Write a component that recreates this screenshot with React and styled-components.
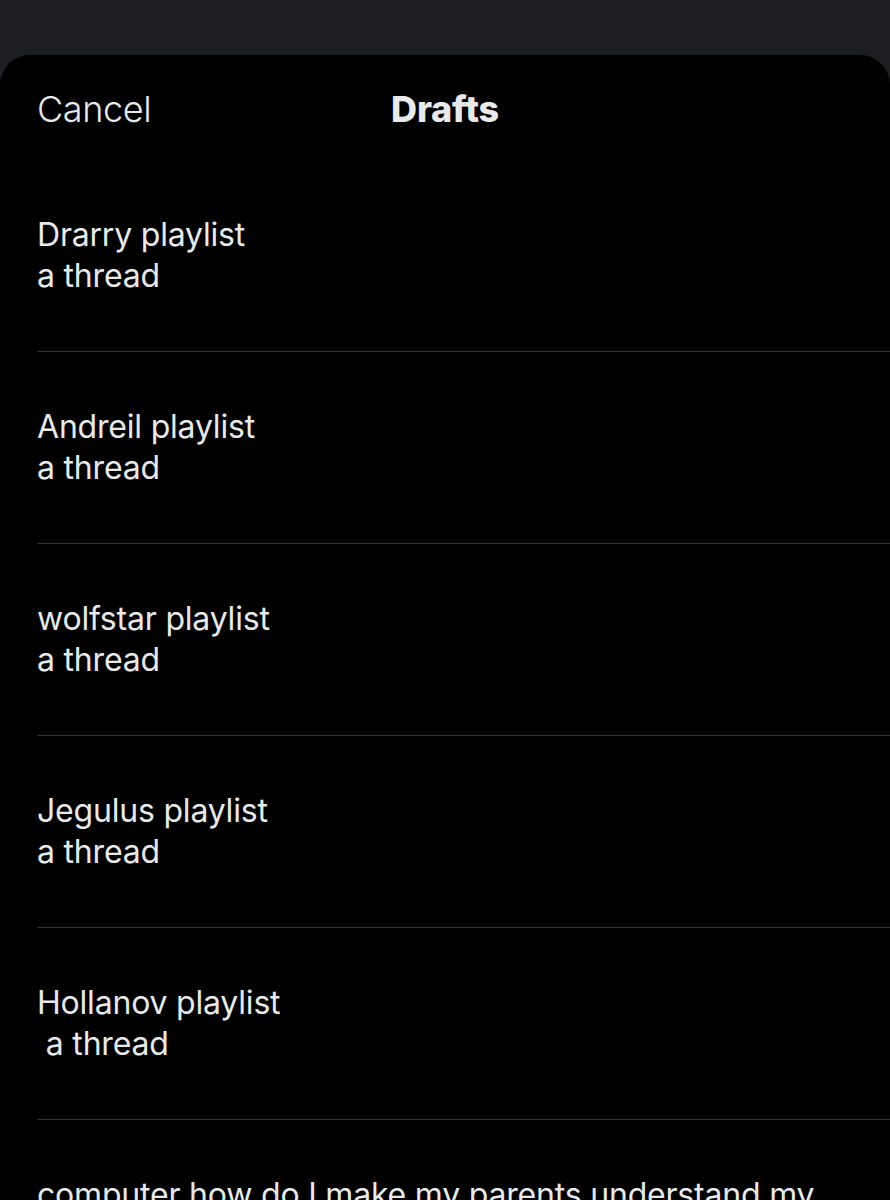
import styled, { createGlobalStyle } from 'styled-components'

const Global = createGlobalStyle`
  html, body {
    margin: 0;
    padding: 0;
    background: #1d1e22;
    overflow: hidden;
  }
  body {
    font-family: Inter, "Open Sans", "Liberation Sans", sans-serif;
    color: #e7e9ea;
  }
`

const Sheet = styled.div`
  margin-top: 55px;
  background: #000;
  border-radius: 30px 30px 0 0;
  height: 1145px;
  overflow: hidden;
`

const Header = styled.div`
  position: relative;
  height: 108px;
  display: flex;
  align-items: center;
  padding: 0 37px;
`

const Cancel = styled.span`
  font-size: 36px;
  font-weight: 300;
  letter-spacing: -0.4px;
`

const Title = styled.h1`
  position: absolute;
  left: 0;
  right: 0;
  margin: 0;
  text-align: center;
  font-size: 36px;
  font-weight: 800;
  letter-spacing: -0.2px;
`

const List = styled.div`
  padding-left: 37px;
`

const Draft = styled.div`
  padding: 54px 0 55px;
  border-bottom: 1px solid #2f3336;
  font-size: 32px;
  line-height: 41px;
  letter-spacing: -0.2px;
  white-space: pre;
  &:first-child {
    padding-top: 51px;
  }
`

const drafts = [
  ['Drarry playlist', 'a thread'],
  ['Andreil playlist', 'a thread'],
  ['wolfstar playlist', 'a thread'],
  ['Jegulus playlist', 'a thread'],
  ['Hollanov playlist', ' a thread'],
  ['computer how do I make my parents understand my'],
]

export default function App() {
  return (
    <>
      <Global />
      <Sheet>
        <Header>
          <Cancel>Cancel</Cancel>
          <Title>Drafts</Title>
        </Header>
        <List>
          {drafts.map((lines, i) => (
            <Draft key={i}>
              {lines.map((l, j) => (
                <div key={j}>{l}</div>
              ))}
            </Draft>
          ))}
        </List>
      </Sheet>
    </>
  )
}
